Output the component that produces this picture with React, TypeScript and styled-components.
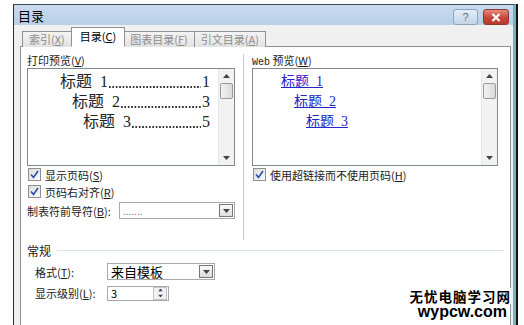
import styled, { createGlobalStyle } from "styled-components";

const GlobalStyle = createGlobalStyle`
  html, body {
    margin: 0;
    height: 325px;
    overflow: hidden;
    background: #ffffff;
  }
  body {
    font-family: "Noto Sans CJK SC", "Liberation Sans", sans-serif;
    font-size: 11px;
    color: #1a1a1a;
  }
`;

const printLines = [
  { text: "标题  1", page: "1", indent: 32 },
  { text: "标题  2", page: "3", indent: 44 },
  { text: "标题  3", page: "5", indent: 55 },
];

const webLinks = [
  { text: "标题  1", indent: 28 },
  { text: "标题  2", indent: 41 },
  { text: "标题  3", indent: 53 },
];

const Tri = ({ up }: { up?: boolean }) => (
  <svg width="7" height="4" viewBox="0 0 7 4">
    <path d={up ? "M0 4 L3.5 0 L7 4 Z" : "M0 0 L3.5 4 L7 0 Z"} fill="#444" />
  </svg>
);

const Check = () => (
  <svg width="9" height="9" viewBox="0 0 9 9">
    <path d="M1 4.5 L3.5 7.5 L8 1" stroke="#2a4fa8" strokeWidth="1.6" fill="none" />
  </svg>
);

const Scroll = () => (
  <ScrollBar>
    <ArrowCell><Tri up /></ArrowCell>
    <Thumb />
    <Track />
    <ArrowCell><Tri /></ArrowCell>
  </ScrollBar>
);

export default function App() {
  return (
    <>
      <GlobalStyle />
      <Window>
        <TitleBar>
          <Title>目录</Title>
          <Caption>
            <HelpBtn>?</HelpBtn>
            <CloseBtn>
              <svg width="10" height="9" viewBox="0 0 10 9">
                <path d="M1.5 1 L8.5 8 M8.5 1 L1.5 8" stroke="#fff" strokeWidth="2.2" />
              </svg>
            </CloseBtn>
          </Caption>
        </TitleBar>
        <Body>
          <Tabs>
            <Tab>索引(<u>X</u>)</Tab>
            <Tab $active>目录(<u>C</u>)</Tab>
            <Tab>图表目录(<u>F</u>)</Tab>
            <Tab>引文目录(<u>A</u>)</Tab>
          </Tabs>
          <Panel>
            <Columns>
              <Column $width={208}>
                <Label>打印预览(<u>V</u>)</Label>
                <PreviewBox>
                  <PreviewList>
                    {printLines.map((l) => (
                      <PrintLine key={l.text} $indent={l.indent}>
                        <span>{l.text}</span>
                        <Leader />
                        <span>{l.page}</span>
                      </PrintLine>
                    ))}
                  </PreviewList>
                  <Scroll />
                </PreviewBox>
                <CheckRow>
                  <CheckBox><Check /></CheckBox>
                  <span>显示页码(<u>S</u>)</span>
                </CheckRow>
                <CheckRow>
                  <CheckBox><Check /></CheckBox>
                  <span>页码右对齐(<u>R</u>)</span>
                </CheckRow>
                <FieldRow $labelWidth={92}>
                  <span>制表符前导符(<u>B</u>):</span>
                  <Combo $width={114}>
                    <ComboText $muted>.......</ComboText>
                    <ComboButton><Tri /></ComboButton>
                  </Combo>
                </FieldRow>
              </Column>
              <Divider />
              <Column $width={246}>
                <Label><WebWord>Web</WebWord> 预览(<u>W</u>)</Label>
                <PreviewBox>
                  <PreviewList>
                    {webLinks.map((l) => (
                      <WebLink key={l.text} $indent={l.indent}>{l.text}</WebLink>
                    ))}
                  </PreviewList>
                  <Scroll />
                </PreviewBox>
                <CheckRow>
                  <CheckBox><Check /></CheckBox>
                  <span>使用超链接而不使用页码(<u>H</u>)</span>
                </CheckRow>
              </Column>
            </Columns>
            <Group>
              <GroupHead>常规</GroupHead>
              <GroupBody>
                <FieldRow $labelWidth={72}>
                  <span>格式(<u>T</u>):</span>
                  <Combo $width={106}>
                    <ComboText>来自模板</ComboText>
                    <ComboButton><Tri /></ComboButton>
                  </Combo>
                </FieldRow>
                <FieldRow $labelWidth={72}>
                  <span>显示级别(<u>L</u>):</span>
                  <Spin>
                    <ComboText $small>3</ComboText>
                    <SpinButtons>
                      <SpinHalf><Tri up /></SpinHalf>
                      <SpinHalf><Tri /></SpinHalf>
                    </SpinButtons>
                  </Spin>
                </FieldRow>
              </GroupBody>
            </Group>
            <Buttons>
              <PushButton $width={67}>选项(<u>O</u>)...</PushButton>
              <PushButton $width={66}>修改(<u>M</u>)...</PushButton>
            </Buttons>
          </Panel>
        </Body>
        <Watermark>
          <WmCn>无忧电脑学习网</WmCn>
          <WmEn>wypcw.com</WmEn>
        </Watermark>
      </Window>
    </>
  );
}

const Window = styled.div`
  position: relative;
  margin: 4px 0 0 13px;
  width: 499px;
  height: 360px;
  overflow: hidden;
  border-left: 1px solid #2b2b2b;
  border-top: 1px solid #3a4a5a;
  border-right: 3px solid #6fb3c4;
  box-shadow: 2px 0 0 #111;
  background: #f0f0f0;
`;

const TitleBar = styled.div`
  height: 20px;
  display: flex;
  align-items: center;
  justify-content: space-between;
  padding: 0 4px 0 4px;
  background: linear-gradient(#c9dbef, #b8cfe9);
`;

const Title = styled.div`
  font-size: 13px;
  color: #000;
`;

const Caption = styled.div`
  display: flex;
  gap: 5px;
  margin-top: 4px;
`;

const HelpBtn = styled.div`
  width: 23px;
  height: 14px;
  border: 1px solid #8da4bd;
  border-radius: 3px;
  background: linear-gradient(#e4edf7, #c4d5e8);
  color: #5a6b80;
  font-family: "Liberation Sans", sans-serif;
  font-size: 11px;
  line-height: 14px;
  text-align: center;
`;

const CloseBtn = styled.div`
  width: 24px;
  height: 14px;
  border: 1px solid #8c3a30;
  border-radius: 3px;
  background: linear-gradient(#e58a7c, #c8463a 55%, #b93a2e);
  display: flex;
  align-items: center;
  justify-content: center;
`;

const Body = styled.div`
  padding: 4px 2px 0 6px;
`;

const Tabs = styled.div`
  display: flex;
  align-items: flex-end;
  height: 18px;
  padding-left: 2px;
  position: relative;
  z-index: 1;
`;

const Tab = styled.div<{ $active?: boolean }>`
  height: ${(p) => (p.$active ? 18 : 15)}px;
  padding: 0 ${(p) => (p.$active ? 8 : 6)}px;
  margin: 0 ${(p) => (p.$active ? -1 : 0)}px;
  border: 1px solid #8e9196;
  border-bottom: ${(p) => (p.$active ? "1px solid #fff" : "none")};
  border-left-width: ${(p) => (p.$active ? 1 : 0)}px;
  background: ${(p) => (p.$active ? "#fff" : "linear-gradient(#f3f3f3, #e2e2e2)")};
  color: ${(p) => (p.$active ? "#000" : "#8c8c8c")};
  font-size: 11px;
  line-height: ${(p) => (p.$active ? 17 : 15)}px;
  position: relative;
  z-index: ${(p) => (p.$active ? 2 : 1)};
  &:first-child {
    border-left-width: 1px;
  }
`;

const Panel = styled.div`
  margin-top: -1px;
  border: 1px solid #8e9196;
  background: #fff;
  padding: 7px 3px 40px 6px;
  display: flex;
  flex-direction: column;
`;

const Columns = styled.div`
  display: flex;
  gap: 8px;
  height: 186px;
`;

const Column = styled.div<{ $width: number }>`
  width: ${(p) => p.$width}px;
  display: flex;
  flex-direction: column;
`;

const Divider = styled.div`
  width: 1px;
  background: #c9c9c9;
`;

const Label = styled.div`
  height: 13px;
  line-height: 13px;
  font-size: 11px;
  margin-bottom: 1px;
`;

const WebWord = styled.span`
  font-family: "Liberation Mono", monospace;
  font-size: 10px;
`;

const PreviewBox = styled.div`
  height: 96px;
  border: 1px solid #828790;
  display: flex;
`;

const PreviewList = styled.div`
  flex: 1;
  min-width: 0;
  padding-top: 3px;
`;

const PrintLine = styled.div<{ $indent: number }>`
  display: flex;
  height: 20px;
  line-height: 20px;
  padding: 0 8px 0 ${(p) => p.$indent}px;
  font-family: "Liberation Serif", "Noto Sans CJK SC", serif;
  font-size: 16px;
  color: #222;
  white-space: pre;
`;

const Leader = styled.span`
  flex: 1;
  margin: 0 1px;
  background-image: radial-gradient(circle at 1px 1px, #333 0.8px, transparent 1.2px);
  background-size: 3.4px 2px;
  background-repeat: repeat-x;
  background-position: 0 14px;
`;

const WebLink = styled.div<{ $indent: number }>`
  height: 20px;
  line-height: 20px;
  padding-left: ${(p) => p.$indent}px;
  font-family: "Liberation Serif", "Noto Sans CJK SC", serif;
  font-size: 14px;
  color: #2424c8;
  text-decoration: underline;
  white-space: pre;
`;

const ScrollBar = styled.div`
  width: 15px;
  display: flex;
  flex-direction: column;
  background: #f2f2f2;
  border-left: 1px solid #e6e6e6;
`;

const ArrowCell = styled.div`
  height: 14px;
  display: flex;
  align-items: center;
  justify-content: center;
`;

const Thumb = styled.div`
  height: 14px;
  margin: 0 1px;
  border: 1px solid #9a9a9a;
  border-radius: 2px;
  background: linear-gradient(90deg, #f2f2f2, #dadada);
`;

const Track = styled.div`
  flex: 1;
`;

const CheckRow = styled.div`
  height: 17px;
  display: flex;
  align-items: center;
  gap: 4px;
  padding-left: 1px;
  font-size: 11px;
  &:first-of-type {
    margin-top: 1px;
  }
`;

const CheckBox = styled.div`
  width: 11px;
  height: 11px;
  border: 1px solid #8f8f8f;
  background: linear-gradient(135deg, #dcdcdc, #fbfbfb);
  display: flex;
  align-items: center;
  justify-content: center;
`;

const FieldRow = styled.div<{ $labelWidth: number }>`
  display: flex;
  align-items: center;
  font-size: 11px;
  margin-top: 2px;
  & > span:first-child {
    width: ${(p) => p.$labelWidth}px;
  }
`;

const Combo = styled.div<{ $width: number }>`
  width: ${(p) => p.$width}px;
  height: 15px;
  border: 1px solid #a9a9a9;
  display: flex;
  align-items: center;
  background: #fff;
`;

const ComboText = styled.div<{ $muted?: boolean; $small?: boolean }>`
  flex: 1;
  padding-left: 3px;
  font-size: ${(p) => (p.$muted ? 10 : p.$small ? 11 : 13)}px;
  color: ${(p) => (p.$muted ? "#777" : "#000")};
  line-height: 14px;
`;

const ComboButton = styled.div`
  width: 12px;
  height: 11px;
  margin-right: 1px;
  border: 1px solid #777;
  background: linear-gradient(#fafafa, #dcdcdc);
  display: flex;
  align-items: center;
  justify-content: center;
`;

const Spin = styled.div`
  width: 60px;
  height: 13px;
  border: 1px solid #a9a9a9;
  display: flex;
  align-items: center;
`;

const SpinButtons = styled.div`
  width: 12px;
  height: 11px;
  margin-right: 1px;
  display: flex;
  flex-direction: column;
  border: 1px solid #c4c4c4;
  background: #eef2f6;
`;

const SpinHalf = styled.div`
  flex: 1;
  display: flex;
  align-items: center;
  justify-content: center;
  & svg {
    transform: scale(0.7);
  }
`;

const Group = styled.div`
  display: flex;
  flex-direction: column;
  margin-top: 3px;
`;

const GroupHead = styled.div`
  display: flex;
  align-items: center;
  gap: 6px;
  height: 14px;
  font-size: 12px;
  &::after {
    content: "";
    flex: 1;
    height: 1px;
    background: #dde2e6;
    margin-right: 3px;
  }
`;

const GroupBody = styled.div`
  display: flex;
  flex-direction: column;
  gap: 3px;
  padding: 4px 0 0 8px;
`;

const Buttons = styled.div`
  display: flex;
  justify-content: flex-end;
  gap: 10px;
  margin-top: 26px;
  padding-right: 6px;
`;

const PushButton = styled.div<{ $width: number }>`
  width: ${(p) => p.$width}px;
  height: 21px;
  border: 1px solid #707070;
  border-radius: 3px;
  background: linear-gradient(#f2f2f2, #dddddd);
  text-align: center;
  line-height: 21px;
  font-size: 12px;
`;

const Watermark = styled.div`
  position: absolute;
  right: 2px;
  top: 283px;
  display: flex;
  flex-direction: column;
  align-items: flex-end;
  color: #000;
  font-weight: bold;
  z-index: 5;
`;

const WmCn = styled.div`
  font-family: "Noto Sans CJK SC", sans-serif;
  font-size: 13.5px;
  letter-spacing: 1px;
  line-height: 16px;
  background: #fff;
`;

const WmEn = styled.div`
  font-family: "Liberation Sans", sans-serif;
  font-size: 16px;
  line-height: 14px;
  margin: 1px 4px 0 0;
`;
